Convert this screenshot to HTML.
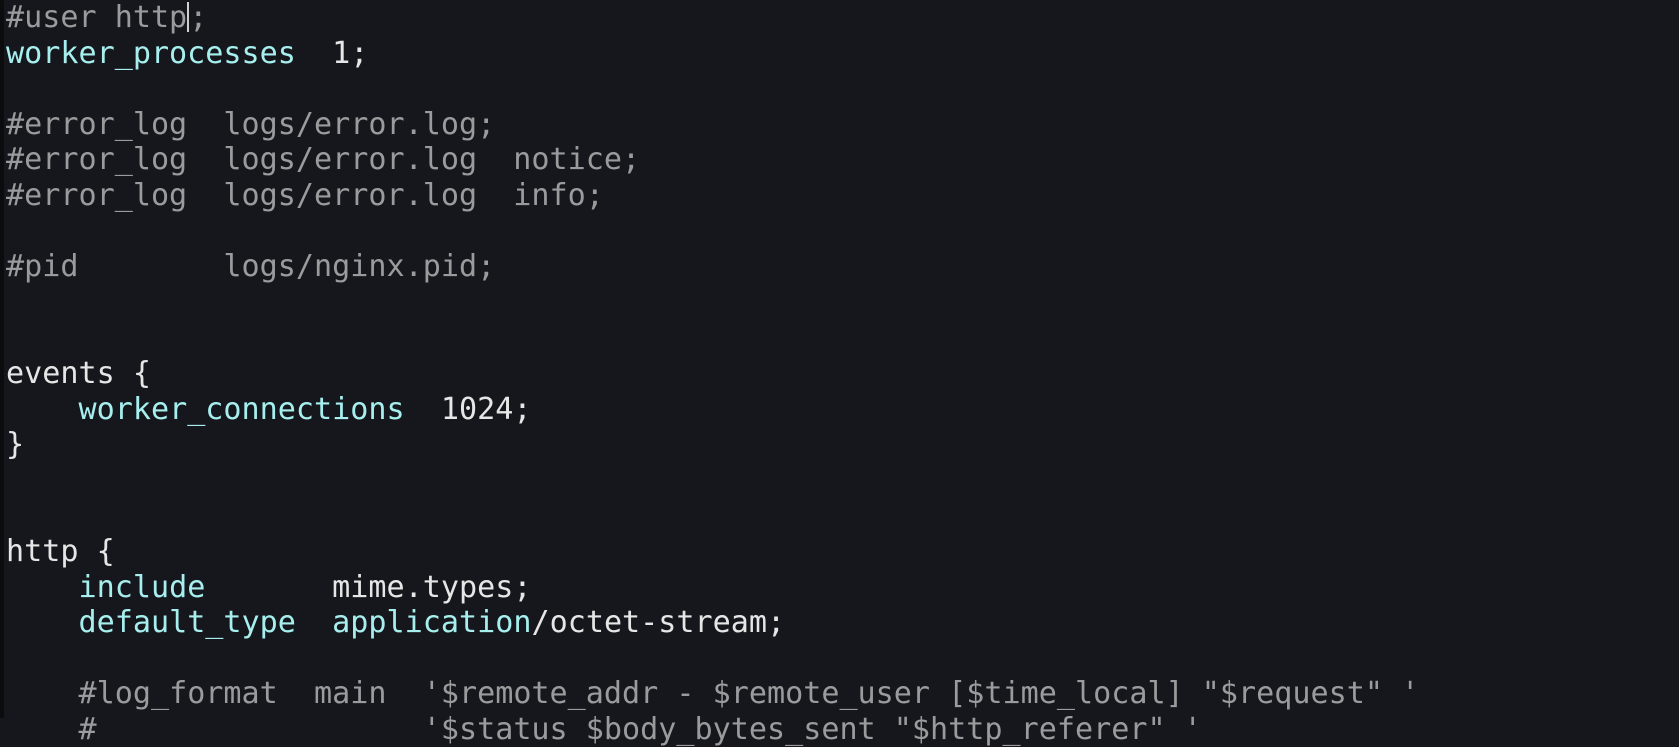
<!DOCTYPE html>
<html><head><meta charset="utf-8"><style>
html,body{margin:0;padding:0;background:#16171c;width:1679px;height:718px;overflow:hidden}
.strip{position:absolute;left:0;top:0;width:4px;height:718px;background:#0c0c0f}
pre{position:absolute;left:6px;top:0;margin:0;font-family:"DejaVu Sans Mono","Liberation Mono",monospace;font-size:30.1px;line-height:35.6px;color:#e6e6e6;white-space:pre}
.c{color:#9b9b9e}.k{color:#a6efee}
.cur{display:inline-block;width:0;border-left:2px solid #cfcfcf;height:30px;vertical-align:-5px}
</style></head><body><div class="strip"></div><pre><span class="c">#user http<span class="cur"></span>;</span>
<span class="k">worker_processes</span>  1;

<span class="c">#error_log  logs/error.log;</span>
<span class="c">#error_log  logs/error.log  notice;</span>
<span class="c">#error_log  logs/error.log  info;</span>

<span class="c">#pid        logs/nginx.pid;</span>


events {
    <span class="k">worker_connections</span>  1024;
}


http {
    <span class="k">include</span>       mime.types;
    <span class="k">default_type</span>  <span class="k">application</span>/octet-stream;

    <span class="c">#log_format  main  '$remote_addr - $remote_user [$time_local] "$request" '</span>
    <span class="c">#                  '$status $body_bytes_sent "$http_referer" '</span>
</pre></body></html>
